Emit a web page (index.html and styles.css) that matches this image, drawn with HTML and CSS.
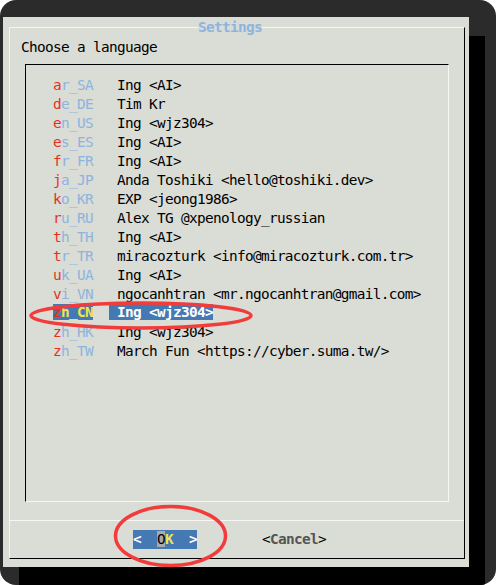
FILE: index.html
```html
<!DOCTYPE html>
<html>
<head>
<meta charset="utf-8">
<title>Settings</title>
<link rel="stylesheet" href="styles.css">
</head>
<body>
<div class="window">
  <div class="dialog">
    <div class="frame">
      <div class="title">Settings</div>
      <div class="prompt">Choose a language</div>
      <div class="listbox">
        <div class="row"><span class="code"><span class="hot">a</span>r_SA</span><span class="name">Ing &lt;AI&gt;</span></div>
        <div class="row"><span class="code"><span class="hot">d</span>e_DE</span><span class="name">Tim Kr</span></div>
        <div class="row"><span class="code"><span class="hot">e</span>n_US</span><span class="name">Ing &lt;wjz304&gt;</span></div>
        <div class="row"><span class="code"><span class="hot">e</span>s_ES</span><span class="name">Ing &lt;AI&gt;</span></div>
        <div class="row"><span class="code"><span class="hot">f</span>r_FR</span><span class="name">Ing &lt;AI&gt;</span></div>
        <div class="row"><span class="code"><span class="hot">j</span>a_JP</span><span class="name">Anda Toshiki &lt;hello@toshiki.dev&gt;</span></div>
        <div class="row"><span class="code"><span class="hot">k</span>o_KR</span><span class="name">EXP &lt;jeong1986&gt;</span></div>
        <div class="row"><span class="code"><span class="hot">r</span>u_RU</span><span class="name">Alex TG @xpenology_russian</span></div>
        <div class="row"><span class="code"><span class="hot">t</span>h_TH</span><span class="name">Ing &lt;AI&gt;</span></div>
        <div class="row"><span class="code"><span class="hot">t</span>r_TR</span><span class="name">miracozturk &lt;info@miracozturk.com.tr&gt;</span></div>
        <div class="row"><span class="code"><span class="hot">u</span>k_UA</span><span class="name">Ing &lt;AI&gt;</span></div>
        <div class="row"><span class="code"><span class="hot">v</span>i_VN</span><span class="name">ngocanhtran &lt;mr.ngocanhtran@gmail.com&gt;</span></div>
        <div class="row selected"><span class="code"><span class="hot">z</span>h_CN</span><span class="name">Ing &lt;wjz304&gt;</span></div>
        <div class="row"><span class="code"><span class="hot">z</span>h_HK</span><span class="name">Ing &lt;wjz304&gt;</span></div>
        <div class="row"><span class="code"><span class="hot">z</span>h_TW</span><span class="name">March Fun &lt;https://cyber.suma.tw/&gt;</span></div>
      </div>
      <div class="buttons">
        <div class="btn btn-ok"><span class="arr">&lt;</span>  <span class="cursor">O</span><span class="hotk">K</span>  <span class="arr">&gt;</span></div>
        <div class="btn btn-cancel">&lt;<span class="lbl">Cancel</span>&gt;</div>
      </div>
    </div>
  </div>
  <svg class="marks" width="496" height="585" viewBox="0 0 496 585">
    <ellipse cx="141" cy="315.5" rx="110" ry="12.5" fill="none" stroke="#f23c3c" stroke-width="3.5"/>
    <ellipse cx="170.5" cy="536" rx="55" ry="29.5" fill="none" stroke="#f23c3c" stroke-width="3.5"/>
  </svg>
</div>
</body>
</html>
```
FILE: styles.css
```css
html, body {
  margin: 0;
  padding: 0;
  background: #ffffff;
}

.window {
  position: relative;
  width: 496px;
  height: 585px;
  box-sizing: border-box;
  padding: 17px 0 0 3px;
  background: #2b2b2b;
  border-radius: 16px;
  overflow: hidden;
  font-family: "DejaVu Sans Mono", "Liberation Mono", monospace;
  font-size: 14.4px;
  letter-spacing: -0.67px;
  color: #000;
}

.dialog {
  width: 466px;
  height: 550px;
  box-sizing: border-box;
  padding: 10px 0 0 6px;
  background: #dadcd6;
  box-shadow: 16px 19px 0 #000;
}

.frame {
  position: relative;
  width: 456px;
  height: 532px;
  box-sizing: border-box;
  border-style: solid;
  border-width: 1px;
  border-color: #f6f6f4 #000 #000 #f6f6f4;
  display: flex;
  flex-direction: column;
}

.title {
  position: absolute;
  left: 188px;
  top: -10px;
  width: 64px;
  line-height: 19px;
  font-weight: bold;
  color: #8db4de;
  background: #dadcd6;
}

.prompt {
  margin: 10px 0 0 11px;
  line-height: 19px;
  white-space: pre;
}

.listbox {
  margin: 7px 0 0 15px;
  width: 424px;
  height: 438px;
  box-sizing: border-box;
  border-style: solid;
  border-width: 1px;
  border-color: #000 #f6f6f4 #f6f6f4 #000;
  padding: 11px 0 0 27px;
}

.row {
  display: flex;
  align-items: flex-start;
  height: 19px;
  line-height: 19px;
  white-space: pre;
}

.code {
  width: 40px;
  color: #8db4de;
}

.hot {
  color: #e3321f;
}

.name {
  margin-left: 16px;
  padding-left: 8px;
}

.row.selected .code,
.row.selected .name {
  line-height: 16px;
  background: #4579b3;
}

.row.selected .code {
  color: #f3e44a;
  font-weight: bold;
}

.row.selected .hot {
  color: #e3321f;
}

.row.selected .name {
  color: #fff;
  font-weight: bold;
}

.buttons {
  margin-top: 18px;
  flex: 1;
  border-top: 1px solid #f6f6f4;
  display: flex;
  align-items: center;
  gap: 65px;
  padding-left: 123px;
}

.btn {
  height: 19px;
  line-height: 19px;
  white-space: pre;
}

.btn-ok {
  background: #4579b3;
  color: #000;
}

.btn-ok .arr {
  color: #fff;
  font-weight: bold;
}

.btn-ok .cursor {
  background: #a9a9a9;
  color: #000;
}

.btn-ok .hotk {
  color: #f3e44a;
  font-weight: bold;
}

.btn-cancel .lbl {
  color: #555;
  font-weight: bold;
}

.marks {
  position: absolute;
  left: 0;
  top: 0;
  pointer-events: none;
}
```
